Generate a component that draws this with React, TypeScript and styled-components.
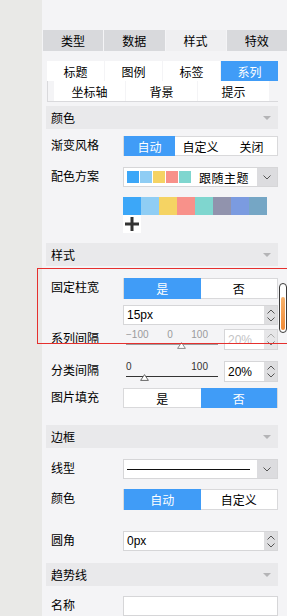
import React from "react";
import styled, { createGlobalStyle } from "styled-components";

const GlobalStyle = createGlobalStyle`
  html, body { margin: 0; padding: 0; overflow: hidden; background: #f4f4f6; }
  body { font-family: "Liberation Sans", "Noto Sans CJK SC", sans-serif; font-size: 12px; color: #000; }
  * { box-sizing: border-box; }
`;

const BLUE = "#409cf7";

const Page = styled.div`
  position: relative;
  display: flex;
  width: 287px;
  height: 616px;
  overflow: hidden;
`;

const LeftStrip = styled.div`
  width: 42px;
  flex: none;
  background: #e9e9e7;
`;

const Panel = styled.div`
  flex: 1;
  background: #f4f4f6;
  padding-top: 30px;
  display: flex;
  flex-direction: column;
`;

const TopTabs = styled.div`
  display: grid;
  grid-template-columns: repeat(4, 1fr);
  gap: 1px;
  margin-left: 1px;
  height: 25px;
`;

const TopTab = styled.div<{ $active?: boolean }>`
  background: ${(p) => (p.$active ? "#efeff1" : "#d8d9dc")};
  display: flex;
  align-items: center;
  justify-content: center;
  font-size: 12px;
  color: #000;
`;

const Content = styled.div`
  padding: 0 9px 0 4px;
  display: flex;
  flex-direction: column;
`;

const SubTabs = styled.div`
  margin: 10px 0 0 1px;
  width: 231px;
  display: flex;
  flex-direction: column;
`;

const SubRow = styled.div<{ $cols: number; $boxed?: boolean }>`
  display: grid;
  grid-template-columns: repeat(${(p) => p.$cols}, ${(p) => (p.$cols === 4 ? "57px" : "71px")});
  gap: 1px;
  height: ${(p) => (p.$boxed ? 21 : 20)}px;
  ${(p) =>
    p.$boxed
      ? `border-left: 1px solid #d9d9dc; border-bottom: 1px solid #d9d9dc; padding-left: 6px;`
      : ""}
`;

const SubTab = styled.div<{ $active?: boolean }>`
  background: ${(p) => (p.$active ? BLUE : "#fff")};
  color: ${(p) => (p.$active ? "#fff" : "#000")};
  display: flex;
  align-items: center;
  justify-content: center;
  font-size: 12px;
  height: 20px;
`;

const Header = styled.div<{ $mt: number }>`
  margin-top: ${(p) => p.$mt}px;
  height: 23px;
  background: #e9e9eb;
  display: flex;
  align-items: center;
  justify-content: space-between;
  padding: 0 7px 0 5px;
  font-size: 12px;
  color: #000;
`;

const Caret = styled.span`
  width: 0;
  height: 0;
  border-left: 4px solid transparent;
  border-right: 4px solid transparent;
  border-top: 4px solid #b4b4b6;
`;

const Row = styled.div<{ $mt: number }>`
  margin-top: ${(p) => p.$mt}px;
  display: flex;
  align-items: flex-start;
`;

const Label = styled.div<{ $lh?: number }>`
  width: 77px;
  flex: none;
  padding-left: 5px;
  line-height: ${(p) => p.$lh ?? 20}px;
  font-size: 12px;
  color: #000;
`;

const Control = styled.div`
  width: 155px;
  flex: none;
  display: flex;
  flex-direction: column;
  gap: 6px;
`;

const Segmented = styled.div<{ $h: number }>`
  display: flex;
  height: ${(p) => p.$h}px;
  border: 1px solid #d9d9db;
  background: #fff;
`;

const Segment = styled.div<{ $active?: boolean }>`
  flex: 1;
  display: flex;
  align-items: center;
  justify-content: center;
  background: ${(p) => (p.$active ? BLUE : "transparent")};
  color: ${(p) => (p.$active ? "#fff" : "#000")};
  font-size: 12px;
  margin: -1px 0;
`;

const Field = styled.div<{ $w?: number; $h?: number }>`
  display: flex;
  width: ${(p) => (p.$w ? `${p.$w}px` : "100%")};
  height: ${(p) => p.$h ?? 20}px;
  border: 1px solid #d6d6d8;
  background: #fff;
  flex: none;
`;

const FieldText = styled.div<{ $disabled?: boolean }>`
  flex: 1;
  padding-left: 3px;
  display: flex;
  align-items: center;
  font-size: 12px;
  color: ${(p) => (p.$disabled ? "#c4c4c6" : "#000")};
`;

const Spinner = styled.div<{ $disabled?: boolean }>`
  width: 13px;
  flex: none;
  background: ${(p) => (p.$disabled ? "#e6e6e8" : "#dedee0")};
  display: flex;
  flex-direction: column;
  align-items: center;
  justify-content: center;
  gap: 3px;
`;

const DropButton = styled.div`
  width: 20px;
  flex: none;
  background: #dcdcdf;
  display: flex;
  align-items: center;
  justify-content: center;
`;

const SwatchRow = styled.div`
  display: flex;
  align-items: center;
  gap: 1px;
  padding-left: 3px;
`;

const MiniSwatch = styled.div<{ $c: string }>`
  width: 12px;
  height: 12px;
  background: ${(p) => p.$c};
`;

const SelectText = styled.div`
  flex: 1;
  display: flex;
  align-items: center;
  justify-content: center;
  font-size: 12px;
  letter-spacing: 0.5px;
  color: #000;
`;

const LineSample = styled.div`
  flex: 1;
  display: flex;
  align-items: center;
  padding: 0 7px 0 3px;
  &::after {
    content: "";
    display: block;
    width: 100%;
    height: 1px;
    background: #111;
  }
`;

const PaletteBlock = styled.div`
  margin: 10px 0 0 77px;
  display: flex;
  flex-direction: column;
`;

const Palette = styled.div`
  display: flex;
`;

const Swatch = styled.div<{ $c: string }>`
  width: 18px;
  height: 18px;
  background: ${(p) => p.$c};
`;

const AddButton = styled.div`
  width: 18px;
  height: 18px;
  background: #fff;
  display: flex;
  align-items: center;
  justify-content: center;
`;

const SliderLine = styled.div`
  display: flex;
  align-items: flex-start;
  height: 21px;
`;

const Slider = styled.div`
  position: relative;
  width: 92px;
  height: 21px;
  margin: 0 6px 0 3px;
  flex: none;
`;

const Ticks = styled.div<{ $disabled?: boolean }>`
  display: flex;
  justify-content: space-between;
  padding-right: 10px;
  font-size: 10px;
  line-height: 10px;
  margin-top: 1px;
  color: ${(p) => (p.$disabled ? "#9a9a9c" : "#333")};
`;

const Track = styled.div<{ $disabled?: boolean }>`
  position: absolute;
  left: 0;
  right: 0;
  top: 15px;
  height: 1px;
  background: ${(p) => (p.$disabled ? "#9c9c9e" : "#333")};
`;

const Thumb = styled.svg`
  position: absolute;
  top: 13px;
`;

const RedFrame = styled.div`
  position: absolute;
  left: 37px;
  top: 268px;
  width: 270px;
  height: 76px;
  border: 1px solid #e5302e;
  pointer-events: none;
`;

const ScrollThumb = styled.div`
  position: absolute;
  left: 279px;
  top: 283px;
  width: 8px;
  height: 50px;
  border: 1px solid #3a3a3a;
  border-radius: 4px;
  background: #fff;
  display: flex;
  flex-direction: column;
  justify-content: flex-end;
  padding: 0 1px 2px;
  &::after {
    content: "";
    display: block;
    height: 33px;
    border-radius: 2px;
    background: linear-gradient(#f7b26c, #f18a35);
  }
`;

const ChevronUp = ({ c = "#555" }: { c?: string }) => (
  <svg width="8" height="5" viewBox="0 0 8 5">
    <polyline points="0.5,4.5 4,1 7.5,4.5" fill="none" stroke={c} strokeWidth="1" />
  </svg>
);

const ChevronDown = ({ c = "#555" }: { c?: string }) => (
  <svg width="8" height="5" viewBox="0 0 8 5">
    <polyline points="0.5,0.5 4,4 7.5,0.5" fill="none" stroke={c} strokeWidth="1" />
  </svg>
);

const NumberField = ({ value, disabled, w }: { value: string; disabled?: boolean; w?: number }) => (
  <Field $w={w} $h={w ? 21 : 20}>
    <FieldText $disabled={disabled}>{value}</FieldText>
    <Spinner $disabled={disabled}>
      <ChevronUp c={disabled ? "#aaa" : "#555"} />
      <ChevronDown c={disabled ? "#777" : "#555"} />
    </Spinner>
  </Field>
);

const RangeSlider = ({
  min,
  max,
  value,
  disabled,
  ticks,
}: {
  min: number;
  max: number;
  value: number;
  disabled?: boolean;
  ticks: string[];
}) => {
  const x = ((value - min) / (max - min)) * 92 - 4.5;
  return (
    <Slider>
      <Ticks $disabled={disabled}>
        {ticks.map((t) => (
          <span key={t}>{t}</span>
        ))}
      </Ticks>
      <Track $disabled={disabled} />
      <Thumb width="9" height="7" viewBox="0 0 9 7" style={{ left: x }}>
        <polygon points="4.5,0.6 8.4,6.4 0.6,6.4" fill="#fff" stroke={disabled ? "#8a8a8a" : "#666"} strokeWidth="1" />
      </Thumb>
    </Slider>
  );
};

const PALETTE = ["#3ca7f8", "#8fcdf4", "#f5d363", "#f8918a", "#7fd6cf", "#9193ad", "#7b9be0", "#75a6c5"];

export default function App() {
  return (
    <>
      <GlobalStyle />
      <Page>
        <LeftStrip />
        <Panel>
          <TopTabs>
            <TopTab>类型</TopTab>
            <TopTab>数据</TopTab>
            <TopTab $active>样式</TopTab>
            <TopTab>特效</TopTab>
          </TopTabs>
          <Content>
            <SubTabs>
              <SubRow $cols={4}>
                <SubTab>标题</SubTab>
                <SubTab>图例</SubTab>
                <SubTab>标签</SubTab>
                <SubTab $active>系列</SubTab>
              </SubRow>
              <SubRow $cols={3} $boxed>
                <SubTab>坐标轴</SubTab>
                <SubTab>背景</SubTab>
                <SubTab>提示</SubTab>
              </SubRow>
            </SubTabs>

            <Header $mt={4}>
              颜色
              <Caret />
            </Header>
            <Row $mt={7}>
              <Label>渐变风格</Label>
              <Control>
                <Segmented $h={20}>
                  <Segment $active>自动</Segment>
                  <Segment>自定义</Segment>
                  <Segment>关闭</Segment>
                </Segmented>
              </Control>
            </Row>
            <Row $mt={11}>
              <Label>配色方案</Label>
              <Control>
                <Field>
                  <SwatchRow>
                    {PALETTE.slice(0, 5).map((c) => (
                      <MiniSwatch key={c} $c={c} />
                    ))}
                  </SwatchRow>
                  <SelectText>跟随主题</SelectText>
                  <DropButton>
                    <ChevronDown />
                  </DropButton>
                </Field>
              </Control>
            </Row>
            <PaletteBlock>
              <Palette>
                {PALETTE.map((c) => (
                  <Swatch key={c} $c={c} />
                ))}
              </Palette>
              <AddButton>
                <svg width="14" height="14" viewBox="0 0 14 14">
                  <rect x="5.5" y="0" width="3" height="14" fill="#333" />
                  <rect x="0" y="5.5" width="14" height="3" fill="#333" />
                </svg>
              </AddButton>
            </PaletteBlock>

            <Header $mt={10}>
              样式
              <Caret />
            </Header>
            <Row $mt={12}>
              <Label>固定柱宽</Label>
              <Control>
                <Segmented $h={21}>
                  <Segment $active>是</Segment>
                  <Segment>否</Segment>
                </Segmented>
                <NumberField value="15px" />
              </Control>
            </Row>
            <Row $mt={4}>
              <Label $lh={21}>系列间隔</Label>
              <SliderLine>
                <RangeSlider min={-100} max={100} value={20} disabled ticks={["−100", "0", "100"]} />
                <NumberField value="20%" disabled w={54} />
              </SliderLine>
            </Row>
            <Row $mt={11}>
              <Label $lh={21}>分类间隔</Label>
              <SliderLine>
                <RangeSlider min={0} max={100} value={20} ticks={["0", "100"]} />
                <NumberField value="20%" w={54} />
              </SliderLine>
            </Row>
            <Row $mt={6}>
              <Label>图片填充</Label>
              <Control>
                <Segmented $h={20}>
                  <Segment>是</Segment>
                  <Segment $active>否</Segment>
                </Segmented>
              </Control>
            </Row>

            <Header $mt={17}>
              边框
              <Caret />
            </Header>
            <Row $mt={11}>
              <Label>线型</Label>
              <Control>
                <Field>
                  <LineSample />
                  <DropButton>
                    <ChevronDown />
                  </DropButton>
                </Field>
              </Control>
            </Row>
            <Row $mt={10}>
              <Label>颜色</Label>
              <Control>
                <Segmented $h={21}>
                  <Segment $active>自动</Segment>
                  <Segment>自定义</Segment>
                </Segmented>
              </Control>
            </Row>
            <Row $mt={21}>
              <Label>圆角</Label>
              <Control>
                <NumberField value="0px" />
              </Control>
            </Row>

            <Header $mt={12}>
              趋势线
              <Caret />
            </Header>
            <Row $mt={10}>
              <Label>名称</Label>
              <Control>
                <Field />
              </Control>
            </Row>
          </Content>
        </Panel>
        <RedFrame />
        <ScrollThumb />
      </Page>
    </>
  );
}
